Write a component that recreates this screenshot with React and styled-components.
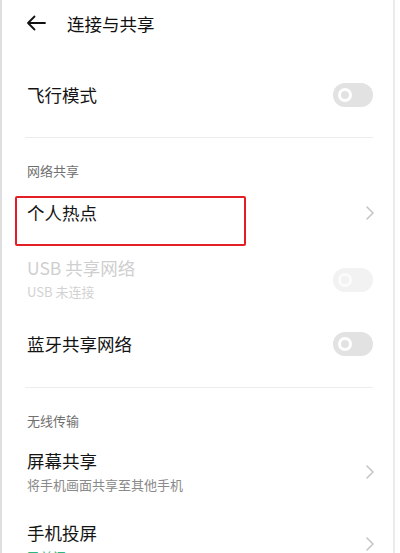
import styled, { createGlobalStyle } from 'styled-components';

const GlobalStyle = createGlobalStyle`
  html, body {
    margin: 0;
    padding: 0;
    background: #fff;
  }
  body {
    font-family: "Noto Sans CJK SC", "Noto Sans", sans-serif;
  }
`;

const Frame = styled.div`
  width: 400px;
  height: 553px;
  overflow: hidden;
  display: flex;
  background: #fff;
`;

const Panel = styled.div`
  width: 391px;
  border-left: 2px solid #dedede;
  border-right: 2px solid #ebebeb;
  background: #fff;
`;

const TopBar = styled.div`
  height: 46px;
  display: flex;
  align-items: center;
  padding-left: 24px;
  gap: 21px;
  font-size: 17.5px;
  color: #111;
`;

const Block = styled.div`
  height: ${(p) => p.$h}px;
  padding: ${(p) => p.$pad || '0'};
  box-sizing: border-box;
  display: flex;
  align-items: center;
  justify-content: space-between;
  padding-left: 25px;
  padding-right: 20px;
  position: relative;
`;

const Texts = styled.div`
  display: flex;
  flex-direction: column;
`;

const Title = styled.div`
  font-size: 17.5px;
  line-height: ${(p) => p.$lh || 22}px;
  color: ${(p) => (p.$off ? '#cfcfcf' : '#141414')};
`;

const Sub = styled.div`
  font-size: 13px;
  line-height: 18px;
  margin-top: ${(p) => p.$mt || 4}px;
  color: ${(p) => p.$color || '#8a8a8a'};
`;

const Divider = styled.div`
  height: 1px;
  background: #ececec;
  margin: ${(p) => p.$mt || 0}px 20px 0 23px;
`;

const SectionLabel = styled.div`
  padding: 24px 0 0 25px;
  font-size: 13px;
  line-height: 18px;
  color: #707070;
`;

const Track = styled.div`
  width: 40px;
  height: 24px;
  border-radius: 12px;
  background: ${(p) => (p.$off ? '#f2f2f2' : '#e2e2e2')};
  display: flex;
  align-items: center;
  padding-left: 5px;
  box-sizing: border-box;
  flex-shrink: 0;
`;

const Knob = styled.div`
  width: 14px;
  height: 14px;
  border-radius: 50%;
  box-sizing: border-box;
  border: 3px solid ${(p) => (p.$off ? '#fbfbfb' : '#fff')};
  background: ${(p) => (p.$off ? '#f2f2f2' : '#e2e2e2')};
`;

const Highlight = styled.div`
  position: absolute;
  left: 13px;
  top: 16px;
  width: 231px;
  height: 50px;
  border: 2px solid #e31e24;
  border-radius: 2px;
  box-sizing: border-box;
`;

const Switch = ({ off }) => (
  <Track $off={off}>
    <Knob $off={off} />
  </Track>
);

const Chevron = () => (
  <svg width="10" height="16" viewBox="0 0 10 16" style={{ marginRight: -2 }}>
    <path d="M2 2 L8 8 L2 14" fill="none" stroke="#c4c4c4" strokeWidth="1.5" strokeLinecap="round" strokeLinejoin="round" />
  </svg>
);

const BackArrow = () => (
  <svg width="20" height="16" viewBox="0 0 20 16">
    <path d="M19 8 H2 M8.5 1.5 L2 8 L8.5 14.5" fill="none" stroke="#111" strokeWidth="1.8" strokeLinecap="round" strokeLinejoin="round" />
  </svg>
);

export default function App() {
  return (
    <>
      <GlobalStyle />
      <Frame>
        <Panel>
          <TopBar>
            <BackArrow />
            <span>连接与共享</span>
          </TopBar>

          <Block $h={91} $pad="7px 0 0">
            <Title>飞行模式</Title>
            <Switch />
          </Block>
          <Divider />

          <SectionLabel>网络共享</SectionLabel>
          <Block $h={66}>
            <Title>个人热点</Title>
            <Chevron />
            <Highlight />
          </Block>
          <Block $h={67} $pad="12px 0">
            <Texts>
              <Title $off $lh={20}>USB 共享网络</Title>
              <Sub $mt={5} $color="#d2d2d2">USB 未连接</Sub>
            </Texts>
            <Switch off />
          </Block>
          <Block $h={62}>
            <Title>蓝牙共享网络</Title>
            <Switch />
          </Block>
          <Divider $mt={12} />

          <SectionLabel>无线传输</SectionLabel>
          <Block $h={80} $pad="20px 0 16px">
            <Texts>
              <Title>屏幕共享</Title>
              <Sub>将手机画面共享至其他手机</Sub>
            </Texts>
            <Chevron />
          </Block>
          <Block $h={68} $pad="12px 0">
            <Texts>
              <Title>手机投屏</Title>
              <Sub $color="#2fb67e">已关闭</Sub>
            </Texts>
            <Chevron />
          </Block>
        </Panel>
      </Frame>
    </>
  );
}
